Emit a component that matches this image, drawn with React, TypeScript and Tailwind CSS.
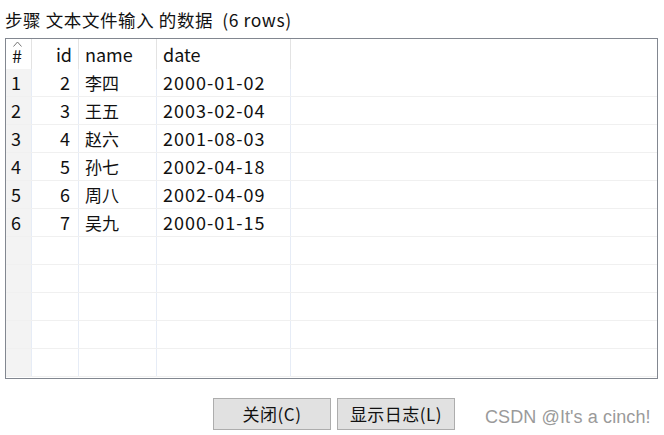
import React from 'react';

const rows = [
  { n: 1, id: 2, name: '李四', date: '2000-01-02' },
  { n: 2, id: 3, name: '王五', date: '2003-02-04' },
  { n: 3, id: 4, name: '赵六', date: '2001-08-03' },
  { n: 4, id: 5, name: '孙七', date: '2002-04-18' },
  { n: 5, id: 6, name: '周八', date: '2002-04-09' },
  { n: 6, id: 7, name: '吴九', date: '2000-01-15' },
];

const font = { fontFamily: '"Noto Sans CJK SC", "Noto Sans", sans-serif' };

export default function App() {
  const filler = Array.from({ length: 5 });

  return (
    <div className="w-[664px] h-[435px] bg-white text-[#111] overflow-hidden" style={font}>
      <div className="pl-[5px] pt-[8px] h-[38px] text-[17.5px] leading-[24px] tracking-[0.6px]">
        步骤 文本文件输入 的数据&nbsp; (6 rows)
      </div>

      {/* 数据表格 */}
      <div className="ml-[5px] w-[653px] h-[341px] border border-[#828790] bg-white overflow-hidden text-[18px]">
        {/* 表头 */}
        <div className="flex h-[30px] leading-[30px]">
          <div className="relative w-[26px] border-r border-[#e3e3e3] pl-[6px]">
            <svg className="absolute left-[7px] top-[2px]" width="9" height="6" viewBox="0 0 9 6">
              <path d="M0.5 5.5 L4.5 1 L8.5 5.5" fill="none" stroke="#777" strokeWidth="1" />
            </svg>
            <span className="relative top-[1px]">#</span>
          </div>
          <div className="w-[47px] border-r border-[#e3e3e3] text-right pr-[6px]">id</div>
          <div className="w-[78px] border-r border-[#e3e3e3] pl-[6px]">name</div>
          <div className="w-[134px] border-r border-[#e3e3e3] pl-[6px]">date</div>
          <div className="flex-1" />
        </div>

        {rows.map((r) => (
          <div key={r.n} className="flex h-[28px] leading-[27px] border-b border-[#f0f0f0]">
            <div className="w-[26px] bg-[#f3f3f3] border-r border-[#e6ecf6] pl-[5px]">{r.n}</div>
            <div className="w-[47px] border-r border-[#e6ecf6] text-right pr-[8px]">{r.id}</div>
            <div className="w-[78px] border-r border-[#e6ecf6] pl-[6px] text-[17px]">{r.name}</div>
            <div className="w-[134px] border-r border-[#e6ecf6] pl-[6px] tracking-[1px]">{r.date}</div>
            <div className="flex-1" />
          </div>
        ))}

        {filler.map((_, i) => (
          <div key={i} className="flex h-[28px] border-b border-[#f0f0f0]">
            <div className="w-[26px] bg-[#f3f3f3] border-r border-[#e6ecf6]" />
            <div className="w-[47px] border-r border-[#e6ecf6]" />
            <div className="w-[78px] border-r border-[#e6ecf6]" />
            <div className="w-[134px] border-r border-[#e6ecf6]" />
            <div className="flex-1" />
          </div>
        ))}
      </div>

      {/* 按钮 */}
      <div className="flex items-center mt-[17px] pl-[213px] gap-[6px] text-[17px]">
        <button className="w-[118px] h-[32px] bg-[#e1e1e1] border border-[#adadad] text-[#111] tracking-[0.5px]">
          关闭(C)
        </button>
        <button className="w-[118px] h-[32px] bg-[#e1e1e1] border border-[#adadad] text-[#111] tracking-[0.5px]">
          显示日志(L)
        </button>
        <span
          className="ml-[24px] mt-[8px] text-[18px] text-[#9a9a9a] tracking-[0.1px]"
          style={{ fontFamily: '"Liberation Sans", Arial, sans-serif' }}
        >
          CSDN @It's a cinch!
        </span>
      </div>
    </div>
  );
}
